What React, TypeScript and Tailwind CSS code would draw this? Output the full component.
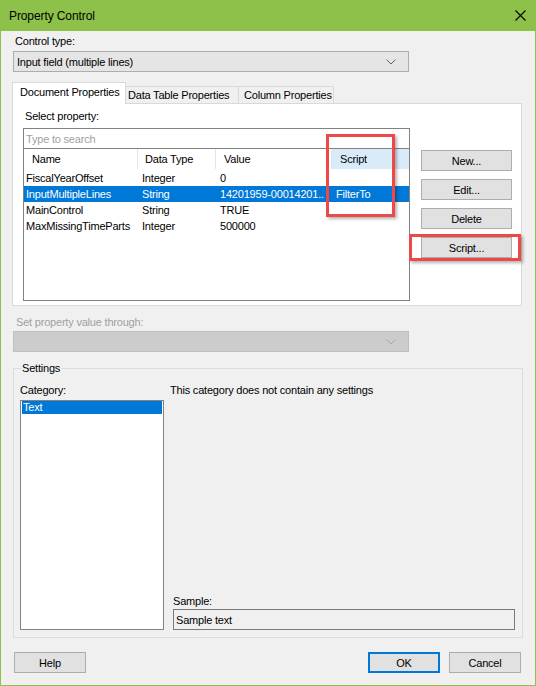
import React from "react";

function Chevron({ color = "#606060" }: { color?: string }) {
  return (
    <svg width="10" height="6" viewBox="0 0 10 6" fill="none">
      <path d="M0.5 0.5L5 5L9.5 0.5" stroke={color} strokeWidth="1" />
    </svg>
  );
}

function Btn({ label, primary = false, w = "w-[91px]" }: { label: string; primary?: boolean; w?: string }) {
  return (
    <div
      className={
        primary
          ? `${w} h-[21px] border-2 border-[#0078d7] bg-[#e1e1e1] flex items-center justify-center`
          : `${w} h-[21px] border border-[#adadad] bg-[#e1e1e1] flex items-center justify-center`
      }
    >
      {label}
    </div>
  );
}

const rows = [
  { name: "FiscalYearOffset", type: "Integer", value: "0", script: "" },
  { name: "InputMultipleLines", type: "String", value: "14201959-00014201..", script: "FilterTo", sel: true },
  { name: "MainControl", type: "String", value: "TRUE", script: "" },
  { name: "MaxMissingTimeParts", type: "Integer", value: "500000", script: "" },
];

export default function App() {
  return (
    <div className="w-[536px] h-[686px] bg-[#8dc149] flex flex-col font-['Liberation_Sans',Arial,sans-serif] text-[11px] leading-[14px] tracking-[-0.2px] text-black overflow-hidden">
      {/* Title bar */}
      <div className="h-[31px] shrink-0 flex items-center justify-between pl-[9px] pr-[10px]">
        <span className="text-[12px] tracking-[-0.1px]">Property Control</span>
        <svg width="11" height="11" viewBox="0 0 11 11" fill="none">
          <path d="M0.5 0.5L10.5 10.5M10.5 0.5L0.5 10.5" stroke="#000" strokeWidth="1.1" />
        </svg>
      </div>

      {/* Body */}
      <div className="flex-1 mx-px mb-px bg-[#f0f0f0] flex flex-col">
        <div className="pt-[3px] pl-[14px]">Control type:</div>
        <div className="mt-[3px] ml-[12px] w-[396px] h-[21px] border border-[#adadad] bg-[#e5e5e5] flex items-center justify-between pl-[3px] pr-[12px]">
          <span>Input field (multiple lines)</span>
          <Chevron />
        </div>

        {/* Tabs */}
        <div className="mt-[10px] ml-[11px] flex items-end h-[21px] relative z-10">
          <div className="w-[114px] h-[22px] -mb-px bg-white border border-b-0 border-[#d9d9d9] pl-[7px] pt-[2px]">
            Document Properties
          </div>
          <div className="w-[113px] h-[17px] border-t border-r border-[#d9d9d9] bg-[#f0f0f0] flex items-center pl-[2px]">
            Data Table Properties
          </div>
          <div className="w-[95px] h-[17px] border-t border-r border-[#d9d9d9] bg-[#f0f0f0] flex items-center pl-[5px]">
            Column Properties
          </div>
        </div>

        {/* Tab panel */}
        <div className="ml-[11px] w-[510px] h-[203px] bg-white border border-[#d9d9d9] pl-[10px] pt-[5px]">
          <div className="pl-[2px]">Select property:</div>
          <div className="mt-[5px] flex">
            <div className="relative w-[387px] flex flex-col">
              <div className="h-[21px] border border-[#828282] flex items-center pl-[2px] text-[#a0a0a0]">
                Type to search
              </div>
              <div className="h-[152px] border border-t-0 border-[#828282] flex flex-col">
                <div className="h-[20px] mb-px flex">
                  <div className="w-[114px] border-r border-[#e5e5e5] flex items-center pl-[8px]">Name</div>
                  <div className="w-[78px] border-r border-[#e5e5e5] flex items-center pl-[7px]">Data Type</div>
                  <div className="w-[116px] border-r border-[#e5e5e5] flex items-center pl-[8px]">Value</div>
                  <div className="flex-1 bg-[#d9ebf9] flex items-center pl-[8px]">Script</div>
                </div>
                {rows.map((r) => (
                  <div
                    key={r.name}
                    className={
                      r.sel
                        ? "h-[16px] flex items-center bg-[#0078d7] text-white"
                        : "h-[16px] flex items-center"
                    }
                  >
                    <div className="w-[114px] pl-[2px] whitespace-nowrap overflow-hidden">{r.name}</div>
                    <div className="w-[78px] pl-[4px] whitespace-nowrap overflow-hidden">{r.type}</div>
                    <div className="w-[116px] pl-[4px] whitespace-nowrap overflow-hidden">{r.value}</div>
                    <div className="flex-1 pl-[4px] whitespace-nowrap overflow-hidden">{r.script}</div>
                  </div>
                ))}
              </div>
              <div className="absolute left-[303px] top-[6px] w-[69px] h-[83px] border-[3px] border-[#f04848] shadow-[2px_2px_3px_rgba(0,0,0,0.3)] pointer-events-none" />
            </div>
            <div className="ml-[11px] mt-[22px] flex flex-col gap-[8px]">
              <Btn label="New..." />
              <Btn label="Edit..." />
              <Btn label="Delete" />
              <div className="relative">
                <Btn label="Script..." />
                <div className="absolute left-[-12px] top-[-3px] w-[112px] h-[27px] border-[3px] border-[#f04848] shadow-[2px_2px_3px_rgba(0,0,0,0.3)] pointer-events-none" />
              </div>
            </div>
          </div>
        </div>

        {/* Set property value through */}
        <div className="mt-[9px] pl-[15px] text-[#a0a0a0]">Set property value through:</div>
        <div className="mt-[2px] ml-[12px] w-[396px] h-[21px] border border-[#bfbfbf] bg-[#cccccc] flex items-center justify-end pr-[12px]">
          <Chevron color="#a6a6a6" />
        </div>

        {/* Settings group */}
        <div className="relative mt-[16px] ml-[12px] w-[510px] border border-[#dcdcdc] pl-[6px] pr-[7px] pt-[14px] pb-[7px] flex">
          <div className="absolute left-[7px] top-[-8px] bg-[#f0f0f0] px-px">Settings</div>
          <div className="w-[144px] flex flex-col">
            <div>Category:</div>
            <div className="mt-[3px] h-[230px] border border-[#828282] bg-white">
              <div className="mx-px h-[13px] leading-[13px] bg-[#0078d7] text-white pl-px">Text</div>
            </div>
          </div>
          <div className="ml-[6px] flex-1 flex flex-col">
            <div>This category does not contain any settings</div>
            <div className="flex-1" />
            <div className="pl-[3px]">Sample:</div>
            <div className="mt-px ml-[3px] w-[342px] h-[21px] border border-[#7a7a7a] bg-[#f0f0f0] flex items-center pl-[2px]">
              Sample text
            </div>
          </div>
        </div>

        {/* Bottom buttons */}
        <div className="mt-[14px] flex pl-[13px] pr-[14px]">
          <Btn label="Help" w="w-[72px]" />
          <div className="flex-1" />
          <Btn label="OK" primary w="w-[72px]" />
          <div className="w-[9px]" />
          <Btn label="Cancel" w="w-[72px]" />
        </div>
      </div>
    </div>
  );
}
